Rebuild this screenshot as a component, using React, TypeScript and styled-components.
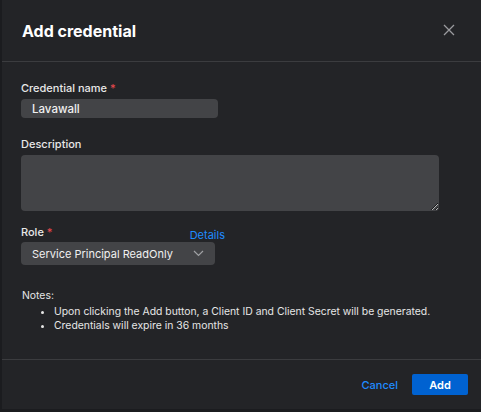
import React from 'react'
import styled, { createGlobalStyle } from 'styled-components'

const GlobalStyle = createGlobalStyle`
  html, body {
    margin: 0;
    padding: 0;
    background: #1b1c1f;
  }
  body {
    font-family: Inter, "Noto Sans", "Liberation Sans", sans-serif;
    color: #e6e6e6;
  }
`

const Page = styled.div`
  width: 481px;
  height: 412px;
  padding: 0 0 3px 2px;
  box-sizing: border-box;
  display: flex;
`

const Dialog = styled.div`
  flex: 1;
  background: #232427;
  display: flex;
  flex-direction: column;
`

const Header = styled.div`
  height: 62px;
  box-sizing: border-box;
  display: flex;
  align-items: center;
  justify-content: space-between;
  padding: 0 24px 0 20px;
  border-bottom: 1px solid #3b3c3f;
`

const Title = styled.h2`
  margin: 0;
  font-size: 16px;
  font-weight: 700;
  color: #ffffff;
`

const CloseButton = styled.button`
  border: none;
  background: transparent;
  padding: 0;
  width: 14px;
  height: 14px;
  color: #9a9b9e;
  cursor: pointer;
  display: flex;
`

const Body = styled.div`
  flex: 1;
  padding: 20px 20px 0 19px;
  display: flex;
  flex-direction: column;
  border-bottom: 1px solid #3b3c3f;
`

const Field = styled.div<{ $gap?: number }>`
  display: flex;
  flex-direction: column;
  margin-bottom: ${(p) => p.$gap ?? 0}px;
`

const Label = styled.label`
  font-size: 11px;
  font-weight: 500;
  color: #e8e8e8;
  margin-bottom: 4px;
  line-height: 13px;
`

const Required = styled.span`
  color: #e5484d;
  margin-left: 3px;
`

const TextInput = styled.input`
  width: 197px;
  height: 19px;
  box-sizing: border-box;
  border: none;
  border-radius: 4px;
  background: #434447;
  color: #f0f0f0;
  font-family: inherit;
  font-size: 11.5px;
  font-weight: 500;
  padding: 0 11px;
  outline: none;
`

const TextArea = styled.textarea`
  width: 418px;
  height: 56px;
  box-sizing: border-box;
  border: none;
  border-radius: 4px;
  background: #434447;
  color: #f0f0f0;
  font-family: inherit;
  padding: 6px 11px;
  outline: none;
  resize: vertical;
  margin: 0;
  display: block;
`

const RoleHeader = styled.div`
  display: flex;
  align-items: flex-end;
  width: 204px;
  justify-content: space-between;
  margin-bottom: -1px;
`

const DetailsLink = styled.a`
  font-size: 11px;
  color: #1f8bff;
  text-decoration: none;
  line-height: 13px;
  margin-bottom: 1px;
  cursor: pointer;
`

const Select = styled.div`
  width: 194px;
  height: 23px;
  box-sizing: border-box;
  border-radius: 4px;
  background: #434447;
  display: flex;
  align-items: center;
  justify-content: space-between;
  padding: 0 11px 0 11px;
  font-size: 11px;
  color: #f0f0f0;
`

const Notes = styled.div`
  margin-top: 24px;
  font-size: 10.4px;
  color: #e6e6e6;
  margin-left: 1px;
  line-height: 14px;
`

const NotesList = styled.ul`
  margin: 2px 0 0;
  padding-left: 32px;
  line-height: 14px;
`

const Footer = styled.div`
  height: 49px;
  box-sizing: border-box;
  display: flex;
  align-items: center;
  justify-content: flex-end;
  gap: 14px;
  padding: 0 13px 0 0;
`

const TextButton = styled.button`
  border: none;
  background: transparent;
  color: #1f8bff;
  font-family: inherit;
  font-size: 11px;
  font-weight: 500;
  padding: 0;
  cursor: pointer;
`

const PrimaryButton = styled.button`
  border: none;
  background: #0062d1;
  color: #ffffff;
  font-family: inherit;
  font-size: 11px;
  font-weight: 600;
  width: 56px;
  height: 21px;
  border-radius: 2px;
  cursor: pointer;
`

function Chevron() {
  return (
    <svg width="11" height="7" viewBox="0 0 11 7" fill="none">
      <path d="M1 1l4.5 4.5L10 1" stroke="#a0a1a4" strokeWidth="1.2" />
    </svg>
  )
}

export default function App() {
  return (
    <Page>
      <GlobalStyle />
      <Dialog>
        <Header>
          <Title>Add credential</Title>
          <CloseButton aria-label="Close">
            <svg width="12" height="12" viewBox="0 0 12 12">
              <path d="M1 1l10 10M11 1L1 11" stroke="currentColor" strokeWidth="1.3" />
            </svg>
          </CloseButton>
        </Header>
        <Body>
          <Field $gap={20}>
            <Label>
              Credential name<Required>*</Required>
            </Label>
            <TextInput defaultValue="Lavawall" />
          </Field>
          <Field $gap={15}>
            <Label>Description</Label>
            <TextArea />
          </Field>
          <Field>
            <RoleHeader>
              <Label>
                Role<Required>*</Required>
              </Label>
              <DetailsLink>Details</DetailsLink>
            </RoleHeader>
            <Select>
              <span>Service Principal ReadOnly</span>
              <Chevron />
            </Select>
          </Field>
          <Notes>
            Notes:
            <NotesList>
              <li>Upon clicking the Add button, a Client ID and Client Secret will be generated.</li>
              <li>Credentials will expire in 36 months</li>
            </NotesList>
          </Notes>
        </Body>
        <Footer>
          <TextButton>Cancel</TextButton>
          <PrimaryButton>Add</PrimaryButton>
        </Footer>
      </Dialog>
    </Page>
  )
}
